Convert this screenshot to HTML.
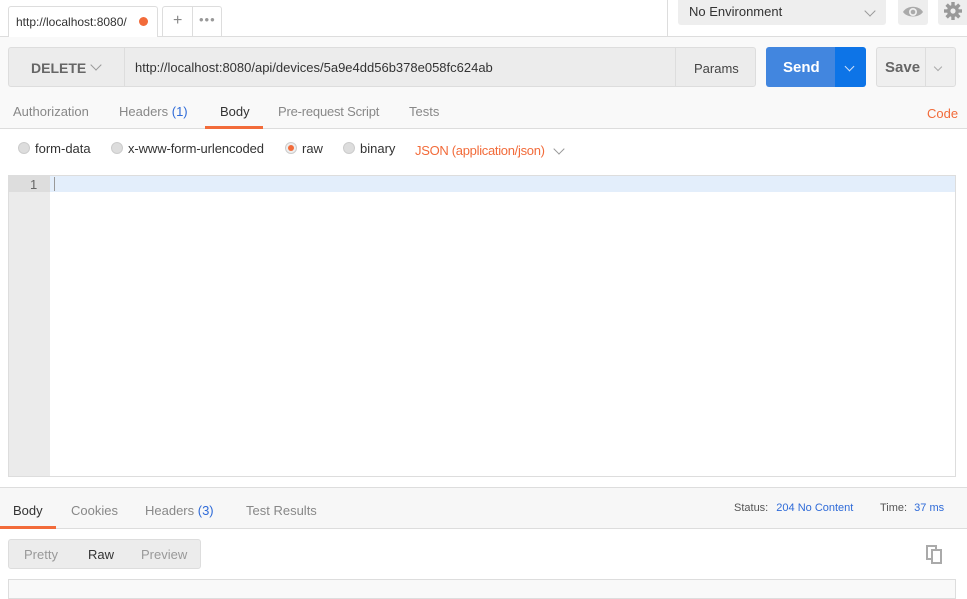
<!DOCTYPE html>
<html><head><meta charset="utf-8"><style>
*{box-sizing:border-box;margin:0;padding:0}
body{width:967px;height:593px;overflow:hidden;background:#fff;font-family:"Liberation Sans",sans-serif;font-size:13px;color:#505050;position:relative}
.a{position:absolute}
.chev{display:inline-block;width:8px;height:8px;border-right:1.5px solid #999;border-bottom:1.5px solid #999;transform:rotate(45deg)}
</style></head><body>
<!-- top bar -->
<div class="a" style="left:0;top:36px;width:967px;height:1px;background:#ddd"></div>
<div class="a" style="left:8px;top:6px;width:150px;height:31px;background:#fff;border:1px solid #ddd;border-bottom:none;border-radius:3px 3px 0 0"></div>
<div class="a" style="left:16px;top:15px;font-size:12px;color:#333">http://localhost:8080/</div>
<div class="a" style="left:139px;top:17px;width:9px;height:9px;border-radius:50%;background:#f26b3a"></div>
<div class="a" style="left:162px;top:6px;width:60px;height:30px;border:1px solid #ddd;border-bottom:none;border-radius:3px 3px 0 0;background:#fff"></div>
<div class="a" style="left:192px;top:6px;width:1px;height:30px;background:#ddd"></div>
<div class="a" style="left:173px;top:12px;font-size:16px;color:#888">+</div>
<div class="a" style="left:199px;top:12px;font-size:13px;color:#999;letter-spacing:1px">•••</div>
<div class="a" style="left:667px;top:0;width:1px;height:36px;background:#ddd"></div>
<div class="a" style="left:678px;top:0;width:208px;height:25px;background:#eee;border-radius:0 0 3px 3px"></div>
<div class="a" style="left:689px;top:4px;color:#333">No Environment</div>
<div class="a" style="left:866px;top:3px"><span class="chev"></span></div>
<div class="a" style="left:898px;top:0;width:30px;height:25px;background:#eee;border-radius:0 0 3px 3px"></div>
<svg class="a" style="left:902px;top:3px" width="22" height="18" viewBox="0 0 22 18"><path d="M1 9C5 2 17 2 21 9C17 15 5 15 1 9Z" fill="#aaa"/><circle cx="11" cy="9" r="4" fill="#eee"/><circle cx="11" cy="9" r="2.3" fill="#aaa"/></svg>
<div class="a" style="left:938px;top:0;width:29px;height:25px;background:#eee;border-radius:0 0 0 3px"></div>
<svg class="a" style="left:944px;top:2px" width="18" height="18" viewBox="0 0 18 18"><g fill="#999"><circle cx="9" cy="9" r="6"/><rect x="7.3" y="0" width="3.4" height="18"/><rect x="0" y="7.3" width="18" height="3.4"/><rect x="7.3" y="0" width="3.4" height="18" transform="rotate(45 9 9)"/><rect x="7.3" y="0" width="3.4" height="18" transform="rotate(-45 9 9)"/></g><circle cx="9" cy="9" r="2.6" fill="#eee"/></svg>
<!-- request area -->
<div class="a" style="left:0;top:37px;width:967px;height:92px;background:#f9f9f9;border-bottom:1px solid #ddd"></div>
<div class="a" style="left:8px;top:47px;width:748px;height:40px;background:#ececec;border:1px solid #ddd;border-radius:3px"></div>
<div class="a" style="left:124px;top:47px;width:1px;height:40px;background:#ddd"></div>
<div class="a" style="left:675px;top:47px;width:1px;height:40px;background:#ddd"></div>
<div class="a" style="left:31px;top:60px;font-size:14px;font-weight:bold;color:#666">DELETE</div>
<div class="a" style="left:92px;top:57px"><span class="chev"></span></div>
<div class="a" style="left:135px;top:60px;color:#333">http://localhost:8080/api/devices/5a9e4dd56b378e058fc624ab</div>
<div class="a" style="left:694px;top:61px;color:#444">Params</div>
<div class="a" style="left:766px;top:47px;width:70px;height:40px;background:#4286df;border-radius:3px 0 0 3px"></div>
<div class="a" style="left:835px;top:47px;width:31px;height:40px;background:#0d74e7;border-radius:0 3px 3px 0"></div>
<div class="a" style="left:783px;top:59px;font-size:15px;font-weight:bold;color:#fff">Send</div>
<div class="a" style="left:846px;top:58px"><span class="chev" style="border-color:#cfe0f8;width:7px;height:7px"></span></div>
<div class="a" style="left:876px;top:47px;width:80px;height:40px;background:#efefef;border:1px solid #ddd;border-radius:3px"></div>
<div class="a" style="left:925px;top:47px;width:1px;height:40px;background:#ddd"></div>
<div class="a" style="left:885px;top:59px;font-size:15px;font-weight:bold;color:#666">Save</div>
<div class="a" style="left:935px;top:58px"><span class="chev" style="width:6px;height:6px;border-color:#aaa"></span></div>
<!-- tabs -->
<div class="a" style="left:13px;top:104px;color:#888">Authorization</div>
<div class="a" style="left:119px;top:104px;color:#888">Headers <span style="color:#2f6bd8">(1)</span></div>
<div class="a" style="left:220px;top:104px;color:#333">Body</div>
<div class="a" style="left:205px;top:126px;width:58px;height:3px;background:#f26b3a"></div>
<div class="a" style="left:278px;top:104px;color:#888;letter-spacing:-0.2px">Pre-request Script</div>
<div class="a" style="left:409px;top:104px;color:#888">Tests</div>
<div class="a" style="left:927px;top:106px;color:#f26b3a">Code</div>
<!-- radios -->
<div class="a" style="left:18px;top:142px;width:12px;height:12px;border-radius:50%;background:#ddd;border:1px solid #ccc"></div>
<div class="a" style="left:35px;top:141px;color:#333">form-data</div>
<div class="a" style="left:111px;top:142px;width:12px;height:12px;border-radius:50%;background:#ddd;border:1px solid #ccc"></div>
<div class="a" style="left:128px;top:141px;color:#333;letter-spacing:-0.1px">x-www-form-urlencoded</div>
<div class="a" style="left:285px;top:142px;width:12px;height:12px;border-radius:50%;background:#eee;border:1px solid #ccc"></div>
<div class="a" style="left:288px;top:145px;width:6px;height:6px;border-radius:50%;background:#f26b3a"></div>
<div class="a" style="left:302px;top:141px;color:#333">raw</div>
<div class="a" style="left:343px;top:142px;width:12px;height:12px;border-radius:50%;background:#ddd;border:1px solid #ccc"></div>
<div class="a" style="left:360px;top:141px;color:#333">binary</div>
<div class="a" style="left:415px;top:143px;color:#f26b3a;letter-spacing:-0.3px">JSON (application/json)</div>
<div class="a" style="left:555px;top:141px"><span class="chev"></span></div>
<!-- editor -->
<div class="a" style="left:8px;top:175px;width:948px;height:302px;border:1px solid #ddd;background:#fff"></div>
<div class="a" style="left:9px;top:176px;width:41px;height:300px;background:#ebebeb"></div>
<div class="a" style="left:9px;top:176px;width:946px;height:16px;background:#e3eefb"></div>
<div class="a" style="left:9px;top:176px;width:41px;height:16px;background:#ddd"></div>
<div class="a" style="left:30px;top:177px;color:#666">1</div>
<div class="a" style="left:54px;top:177px;width:1px;height:14px;background:#999"></div>
<!-- response -->
<div class="a" style="left:0;top:487px;width:967px;height:42px;background:#f7f7f7;border-top:1px solid #ddd;border-bottom:1px solid #ddd"></div>
<div class="a" style="left:13px;top:503px;color:#333">Body</div>
<div class="a" style="left:0;top:526px;width:56px;height:3px;background:#f26b3a"></div>
<div class="a" style="left:71px;top:503px;color:#888">Cookies</div>
<div class="a" style="left:145px;top:503px;color:#888">Headers <span style="color:#2f6bd8">(3)</span></div>
<div class="a" style="left:246px;top:503px;color:#888">Test Results</div>
<div class="a" style="left:734px;top:502px;font-size:11px;color:#555">Status: <span style="color:#2f6bd8;margin-left:5px">204 No Content</span></div>
<div class="a" style="left:880px;top:502px;font-size:11px;color:#555">Time: <span style="color:#2f6bd8;margin-left:4px">37 ms</span></div>
<div class="a" style="left:8px;top:539px;width:193px;height:30px;background:#ececec;border:1px solid #ddd;border-radius:3px"></div>
<div class="a" style="left:24px;top:547px;color:#999">Pretty</div>
<div class="a" style="left:88px;top:547px;color:#333">Raw</div>
<div class="a" style="left:141px;top:547px;color:#999">Preview</div>
<div class="a" style="left:926px;top:545px;width:11px;height:15px;border:2px solid #aaa;background:#fff"></div>
<div class="a" style="left:931px;top:549px;width:11px;height:15px;border:2px solid #aaa;background:#fff"></div>
<div class="a" style="left:8px;top:579px;width:948px;height:20px;background:#f9f9f9;border:1px solid #ddd"></div>
</body></html>
